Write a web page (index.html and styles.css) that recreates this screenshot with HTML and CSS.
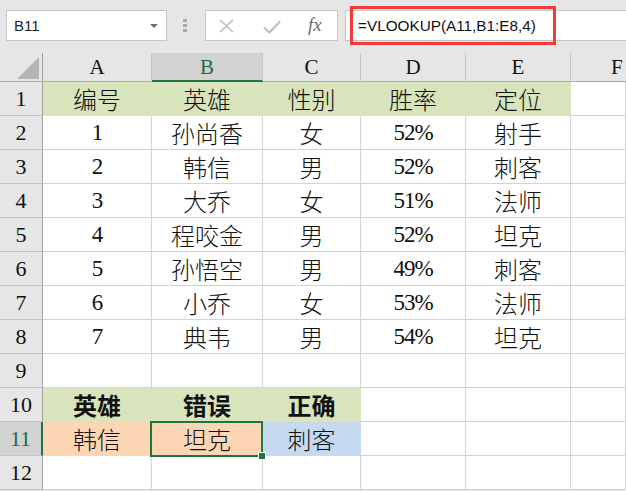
FILE: index.html
```html
<!DOCTYPE html>
<html lang="zh">
<head>
<meta charset="utf-8">
<title>VLOOKUP</title>
<link rel="stylesheet" href="styles.css">
</head>
<body>
<div class="app">
  <div class="toolbar">
    <div class="namebox"><span class="nb-text">B11</span><span class="nb-arrow"></span></div>
    <div class="grip"><i></i><i></i><i></i></div>
    <div class="fnbtns">
      <svg class="ico-x" width="15" height="14" viewBox="0 0 15 14"><path d="M1 1 L14 13 M14 1 L1 13" stroke="#bcbcbc" stroke-width="1.6" fill="none"/></svg>
      <svg class="ico-ok" width="18" height="14" viewBox="0 0 18 14"><path d="M1 7.5 L6.5 12.5 L17 1.5" stroke="#bcbcbc" stroke-width="2.2" fill="none"/></svg>
      <span class="fx">fx</span>
    </div>
    <div class="formula">
      <span class="ftext">=VLOOKUP(A11,B1:E8,4)</span>
      <div class="redbox"></div>
    </div>
  </div>
  <div class="sheet">
    <div class="corner"><span class="tri"></span></div>
    <div class="ch">A</div><div class="ch selh">B</div><div class="ch">C</div><div class="ch">D</div><div class="ch">E</div><div class="ch last">F</div>

    <div class="rh">1</div>
    <div class="c g">编号</div><div class="c g">英雄</div><div class="c g">性别</div><div class="c g">胜率</div><div class="c g">定位</div><div class="c"></div>

    <div class="rh">2</div>
    <div class="c num">1</div><div class="c">孙尚香</div><div class="c">女</div><div class="c num">52%</div><div class="c">射手</div><div class="c"></div>

    <div class="rh">3</div>
    <div class="c num">2</div><div class="c">韩信</div><div class="c">男</div><div class="c num">52%</div><div class="c">刺客</div><div class="c"></div>

    <div class="rh">4</div>
    <div class="c num">3</div><div class="c">大乔</div><div class="c">女</div><div class="c num">51%</div><div class="c">法师</div><div class="c"></div>

    <div class="rh">5</div>
    <div class="c num">4</div><div class="c">程咬金</div><div class="c">男</div><div class="c num">52%</div><div class="c">坦克</div><div class="c"></div>

    <div class="rh">6</div>
    <div class="c num">5</div><div class="c">孙悟空</div><div class="c">男</div><div class="c num">49%</div><div class="c">刺客</div><div class="c"></div>

    <div class="rh">7</div>
    <div class="c num">6</div><div class="c">小乔</div><div class="c">女</div><div class="c num">53%</div><div class="c">法师</div><div class="c"></div>

    <div class="rh">8</div>
    <div class="c num">7</div><div class="c">典韦</div><div class="c">男</div><div class="c num">54%</div><div class="c">坦克</div><div class="c"></div>

    <div class="rh">9</div>
    <div class="c"></div><div class="c"></div><div class="c"></div><div class="c"></div><div class="c"></div><div class="c"></div>

    <div class="rh">10</div>
    <div class="c g bd">英雄</div><div class="c g bd">错误</div><div class="c g bd">正确</div><div class="c"></div><div class="c"></div><div class="c"></div>

    <div class="rh selr">11</div>
    <div class="c o">韩信</div><div class="c o active">坦克</div><div class="c bl">刺客</div><div class="c"></div><div class="c"></div><div class="c"></div>

    <div class="rh">12</div>
    <div class="c"></div><div class="c"></div><div class="c"></div><div class="c"></div><div class="c"></div><div class="c"></div>
  </div>
</div>
</body>
</html>
```
FILE: styles.css
```css
html, body {
  margin: 0;
  padding: 0;
  background: #ffffff;
}
.app {
  width: 626px;
  height: 491px;
  overflow: hidden;
  background: #e6e6e6;
}
.toolbar {
  height: 53px;
  box-sizing: border-box;
  padding-top: 10px;
  display: flex;
  align-items: flex-start;
  background: #e6e6e6;
}
.namebox {
  margin-left: 6px;
  width: 161px;
  height: 31px;
  box-sizing: border-box;
  border: 1px solid #c6c6c6;
  background: #fff;
  display: flex;
  align-items: center;
  justify-content: space-between;
  padding: 0 8px 0 7px;
  font-family: "Liberation Sans", Arial, sans-serif;
  font-size: 15px;
  color: #222;
}
.nb-arrow {
  width: 0;
  height: 0;
  border-left: 4px solid transparent;
  border-right: 4px solid transparent;
  border-top: 4px solid #6f6f6f;
}
.grip {
  margin-left: 16px;
  width: 4px;
  height: 31px;
  display: flex;
  flex-direction: column;
  justify-content: center;
  gap: 2px;
}
.grip i {
  display: block;
  width: 4px;
  height: 3px;
  background: #a8a8a8;
}
.fnbtns {
  margin-left: 18px;
  width: 133px;
  height: 31px;
  box-sizing: border-box;
  border: 1px solid #c6c6c6;
  background: #fff;
  display: flex;
  align-items: center;
  padding-left: 13px;
}
.ico-x { margin-top: 1px; }
.ico-ok { margin-left: 29px; margin-top: 2px; }
.fx {
  margin-left: 27px;
  font-family: "Liberation Serif", "Times New Roman", serif;
  font-style: italic;
  font-size: 19px;
  color: #6b6b6b;
  margin-top: -1px;
}
.formula {
  position: relative;
  margin-left: 7px;
  flex: 1;
  height: 31px;
  box-sizing: border-box;
  border: 1px solid #c6c6c6;
  border-right: none;
  background: #fff;
  display: flex;
  align-items: center;
  padding-left: 12px;
  font-family: "Liberation Sans", Arial, sans-serif;
  font-size: 15.3px;
  color: #111;
}
.redbox {
  position: absolute;
  left: 4px;
  top: -5px;
  width: 206px;
  height: 39px;
  box-sizing: border-box;
  border: 3px solid #f03c3c;
}
.sheet {
  display: grid;
  grid-template-columns: 43px 109px 111px 98px 105px 105px 1fr;
  grid-template-rows: 29px repeat(12, 34px);
  background: #fff;
}
.corner {
  position: relative;
  background: #e6e6e6;
  border-right: 1px solid #9f9f9f;
  border-bottom: 1px solid #ababab;
}
.tri {
  position: absolute;
  right: 3px;
  bottom: 2px;
  width: 22px;
  height: 22px;
  background: #b4b4b4;
  clip-path: polygon(100% 0, 100% 100%, 0 100%);
}
.ch {
  background: #e6e6e6;
  border-right: 1px solid #c4c4c4;
  border-bottom: 1px solid #ababab;
  display: flex;
  align-items: center;
  justify-content: center;
  font-family: "Liberation Serif", "Times New Roman", serif;
  font-size: 21px;
  color: #111;
  padding-top: 1px;
  box-sizing: border-box;
}
.ch.last { border-right: none; justify-content: flex-start; padding-left: 40px; }
.ch.selh {
  background: #d2d2d2;
  color: #1d6b43;
  border-bottom: 2px solid #217346;
}
.rh {
  background: #e6e6e6;
  border-right: 1px solid #9f9f9f;
  border-bottom: 1px solid #c4c4c4;
  display: flex;
  align-items: center;
  justify-content: center;
  font-family: "Liberation Serif", "Times New Roman", serif;
  font-size: 22px;
  color: #111;
  box-sizing: border-box;
}
.rh.selr {
  background: #d2d2d2;
  color: #1d6b43;
  border-right: 2px solid #217346;
}
.c {
  position: relative;
  border-right: 1px solid #d4d4d4;
  border-bottom: 1px solid #d4d4d4;
  display: flex;
  align-items: center;
  justify-content: center;
  font-family: "Liberation Serif", "Noto Sans CJK SC", serif;
  font-size: 24px;
  font-weight: 300;
  color: #111;
  box-sizing: border-box;
  white-space: nowrap;
}
.c.num {
  font-family: "Liberation Serif", "Times New Roman", serif;
  font-size: 23px;
  font-weight: 400;
  letter-spacing: -1px;
}
.c.bd { font-weight: 700; }
.c.g { background: #d8e4bc; border-color: #d8e4bc; }
.c.o { background: #fcd5b4; border-color: #fcd5b4; }
.c.bl { background: #c5d9f1; border-color: #c5d9f1; }
.c.active { z-index: 2; }
.c.active::after {
  content: "";
  position: absolute;
  left: -2px;
  top: -1px;
  right: -1px;
  bottom: -2px;
  border: 2px solid #217346;
}
.c.active::before {
  content: "";
  position: absolute;
  right: -3px;
  bottom: -4px;
  width: 6px;
  height: 6px;
  background: #217346;
  box-shadow: 0 0 0 1px #fff;
  z-index: 3;
}
```
